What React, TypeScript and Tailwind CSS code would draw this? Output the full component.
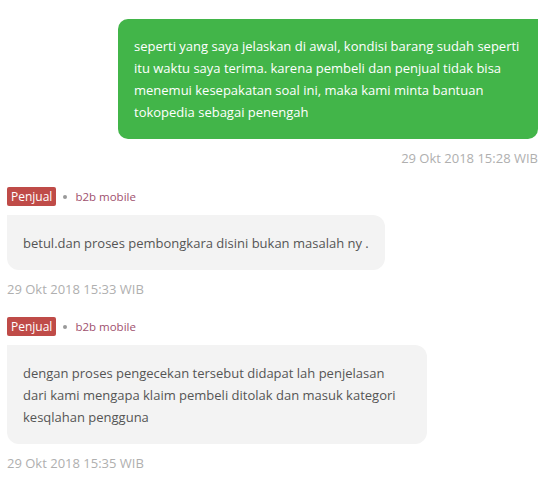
import React from "react";

interface Reply {
  text: string;
  time: string;
}

const replies: Reply[] = [
  { text: "betul.dan proses pembongkara disini bukan masalah ny .", time: "29 Okt 2018 15:33 WIB" },
  {
    text: "dengan proses pengecekan tersebut didapat lah penjelasan dari kami mengapa klaim pembeli ditolak dan masuk kategori kesqlahan pengguna",
    time: "29 Okt 2018 15:35 WIB",
  },
];

const SellerReply: React.FC<Reply> = ({ text, time }) => (
  <div className="flex flex-col items-start">
    <div className="flex items-center h-[19px]">
      <span className="h-[19px] leading-[19px] px-[4px] rounded-[2px] bg-[#bf4b48] text-white text-[12px]">
        Penjual
      </span>
      <span className="ml-[7px] w-[4px] h-[4px] rounded-full bg-[#999]" />
      <span className="ml-[8px] text-[11.5px] text-[#a0506e]">b2b mobile</span>
    </div>
    <div className="mt-[9px] max-w-[420px] bg-[#f3f3f3] rounded-[12px] rounded-tl-none px-4 pt-[17px] pb-[16px] text-[13px] leading-[22px] text-[#555]">
      {text}
    </div>
    <div className="mt-[10px] text-[13px] leading-[18px] text-[#afafaf]">{time}</div>
  </div>
);

export default function App() {
  return (
    <div className="w-[546px] h-[483px] bg-white overflow-hidden pl-[7px] pr-[8px] pt-[19px] font-['Open_Sans',sans-serif]">
      <div className="flex flex-col items-end">
        <div className="w-[420px] bg-[#42b549] rounded-[10px] rounded-tr-none px-4 pt-[16px] pb-[16px] text-[13px] leading-[22px] text-white">
          seperti yang saya jelaskan di awal, kondisi barang sudah seperti itu waktu saya terima. karena pembeli dan penjual tidak bisa menemui kesepakatan soal ini, maka kami minta bantuan tokopedia sebagai penengah
        </div>
        <div className="mt-[10px] text-[13px] leading-[18px] text-[#afafaf]">29 Okt 2018 15:28 WIB</div>
      </div>
      <div className="mt-[20px] flex flex-col gap-[19px]">
        {replies.map((r) => (
          <SellerReply key={r.time} text={r.text} time={r.time} />
        ))}
      </div>
    </div>
  );
}
